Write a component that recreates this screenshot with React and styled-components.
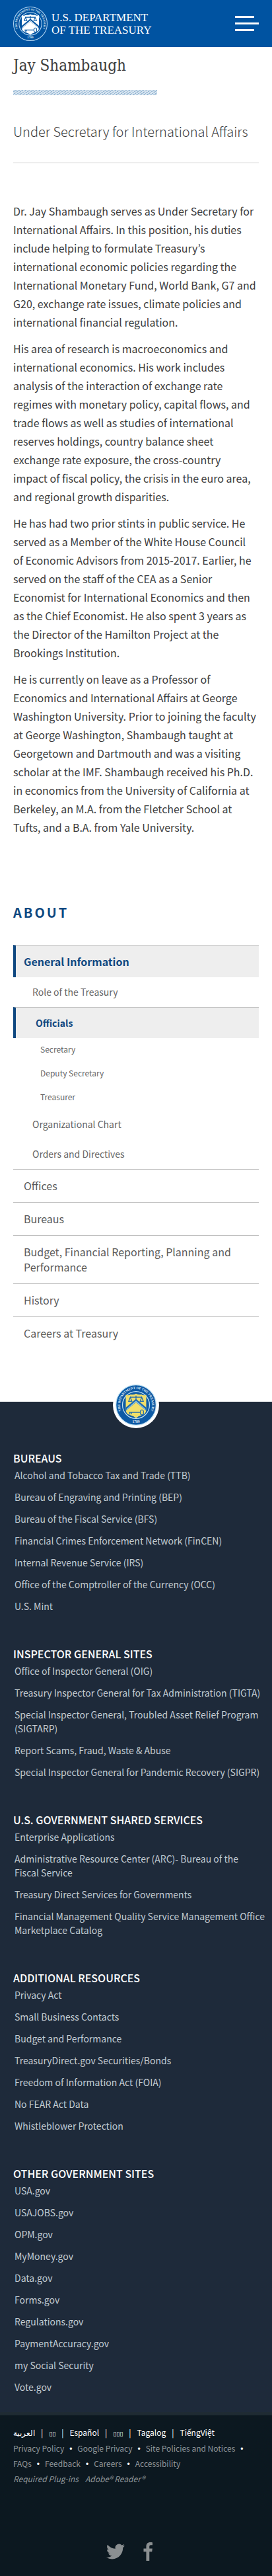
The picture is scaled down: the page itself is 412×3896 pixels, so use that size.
import React from "react";
import styled, { createGlobalStyle } from "styled-components";

const sans = `"Noto Sans CJK KR", "Noto Sans", sans-serif`;
const serif = `"DejaVu Serif Condensed", "Liberation Serif", serif`;

const GlobalStyle = createGlobalStyle`
  *, *::before, *::after { box-sizing: border-box; }
  body { margin: 0; background: #fff; color: #3d3d3d; font-family: ${sans}; font-size: 16px; }
  a { color: inherit; text-decoration: none; }
  ul { list-style: none; margin: 0; padding: 0; }
`;

const TopBar = styled.header`
  display: flex;
  align-items: center;
  justify-content: space-between;
  height: 71px;
  padding: 0 20px;
  background: #0053a1;
`;
const Brand = styled.a`
  display: flex;
  align-items: center;
  gap: 6px;
  color: #fff;
`;
const BrandName = styled.span`
  font-family: "Liberation Serif", serif;
  font-size: 17px;
  line-height: 19px;
`;
const MenuButton = styled.button`
  display: flex;
  flex-direction: column;
  gap: 7px;
  width: 36px;
  padding: 0;
  border: 0;
  background: none;
  cursor: pointer;
`;
const MenuLine = styled.span`
  width: ${(p) => (p.$long ? 36 : 29)}px;
  height: 3px;
  background: #fff;
`;

const Main = styled.main`
  padding: 0 20px;
`;
const Title = styled.h1`
  margin: 0;
  padding: 12px 0 21px;
  font-family: ${serif};
  font-weight: 400;
  font-size: 24px;
  line-height: 32px;
`;
const Hatch = styled.div`
  width: 218px;
  max-width: 100%;
  height: 8px;
  background: repeating-linear-gradient(145deg, #d8e5f0 0 2px, #94b6d3 2px 3px);
`;
const Subtitle = styled.h2`
  margin: 0;
  padding: 39px 0 30px;
  border-bottom: 2px solid #eee;
  font-weight: 300;
  font-size: 20px;
  line-height: 32px;
`;
const Bio = styled.div`
  padding: 58px 2px 0 0;
`;
const Paragraph = styled.p`
  margin: 0 0 12px;
  line-height: 28px;
`;

const SideNav = styled.nav`
  padding: 87px 0 79px;
`;
const NavTitle = styled.h2`
  margin: 0 0 33px;
  color: #0f4880;
  font-size: 20px;
  line-height: 32px;
  letter-spacing: 3px;
`;
const NavRow = styled.a`
  display: block;
  padding: 13px 16px;
  border-top: 1px solid #bfbfbf;
  color: #5b5b5b;
  font-size: 16px;
  line-height: 23px;
`;
const ActiveRow = styled(NavRow)`
  padding: ${(p) => (p.$nested ? "11px 16px 11px 30px" : "12px 12px")};
  border-left: 4px solid #0f4880;
  background: #eee;
  color: #0f4880;
  font-size: ${(p) => (p.$nested ? 14 : 16)}px;
  font-weight: 700;
  line-height: 24px;
`;
const ChildRow = styled.a`
  display: block;
  padding: ${(p) => (p.$deep ? "5px 41px 7px" : "10px 29px 11px")};
  color: #666;
  font-size: ${(p) => (p.$deep ? 12 : 14)}px;
  line-height: 24px;
`;

const Footer = styled.footer`
  background: #1e2a3a;
`;
const SealRow = styled.div`
  display: flex;
  justify-content: center;
  height: 69px;
`;
const SealDisc = styled.div`
  display: grid;
  place-items: center;
  width: 70px;
  height: 70px;
  margin-top: -30px;
  border-radius: 50%;
  background: #fff;
`;
const FooterGroups = styled.div`
  padding: 0 10px 27px 20px;
`;
const FooterGroup = styled.section`
  padding: 4px 0 45px;
  &:last-child { padding-bottom: 0; }
`;
const GroupTitle = styled.h3`
  margin: 0 0 4px;
  color: #fff;
  font-size: 16px;
  font-weight: 500;
  line-height: 24px;
`;
const LinkList = styled.ul`
  display: flex;
  flex-direction: column;
  gap: 12px;
  padding-left: 2px;
  color: #c3ccd3;
  font-size: 14px;
  line-height: 21px;
`;

const Legal = styled.div`
  padding: 15px 20px 25px;
  border-top: 5px solid #1f2b33;
  background: #0c1820;
  color: #8e9599;
  font-size: 12px;
  line-height: 22px;
`;
const Languages = styled.div`
  display: flex;
  color: #fff;
`;
const Language = styled.a`
  & + &::before { content: "|"; margin: 0 9px; }
`;
const Boxed = styled.span`
  font-family: "DejaVu Sans", sans-serif;
  font-size: 9px;
`;
const Policies = styled.ul`
  display: flex;
  flex-wrap: wrap;
`;
const Policy = styled.li`
  &:not(:last-child)::after {
    content: "•";
    margin: 0 8px;
    color: #fff;
    font-family: "Liberation Sans", sans-serif;
  }
`;
const Plugins = styled.p`
  display: flex;
  gap: 10px;
  margin: 0;
  font-style: italic;
`;
const Social = styled.div`
  display: flex;
  justify-content: center;
  gap: 20px;
  padding: 83px 14px 0 0;
  color: #8b8f91;
`;
const SocialLink = styled.a`
  display: grid;
  place-items: center;
  width: 28px;
  height: 32px;
`;

function Seal({ size, mono, id }) {
  const ring = mono ? "#0053a1" : "#0d5aa5";
  const line = mono ? "#b5d8f3" : "#bfe0f2";
  const shield = mono ? "#fff" : "#f1df6a";
  const ink = mono ? "#0053a1" : "#1c69b0";
  return (
    <svg width={size} height={size} viewBox="0 0 100 100" role="img" aria-label="Treasury seal">
      <circle cx="50" cy="50" r="49" fill={ring} stroke={line} strokeWidth="2" />
      <circle cx="50" cy="50" r="33" fill="none" stroke={line} strokeWidth="2" />
      <path id={id} d="M22 77 A39 39 0 1 1 78 77" fill="none" />
      <text fill="#e6f3fb" fontFamily="Liberation Serif, serif" fontWeight="700" fontSize="8">
        <textPath href={`#${id}`} startOffset="50%" textAnchor="middle">THE DEPARTMENT OF THE TREASURY</textPath>
      </text>
      <text x="50" y="93" fill="#e6f3fb" fontFamily="Liberation Serif, serif" fontWeight="700" fontSize="9" textAnchor="middle">1789</text>
      <path d="M25 25 Q31 28 37 24 Q44 26 50 22 Q56 26 63 24 Q69 28 75 25 L75 62 Q75 72 63 75 Q55 77 50 82 Q45 77 37 75 Q25 72 25 62 Z" fill={shield} />
      <path d="M25 64 L50 43 L75 64 L75 56 L50 35 L25 56 Z" fill={ink} />
      <path d="M27 61 L50 41 L73 61" fill="none" stroke={mono ? "#fff" : "#8ec9e6"} strokeWidth="2" />
      <path d="M36 31 H64 M50 27 V38 M36 31 L32 41 H40 Z M64 31 L60 41 H68 Z" fill="none" stroke={ink} strokeWidth="2" />
      <path d="M33 68 H61 M61 68 a4 4 0 1 0 7 0 a4 4 0 1 0 -7 0 M35 68 V73 M39 68 V72" fill="none" stroke={ink} strokeWidth="2" />
    </svg>
  );
}

const bio = [
  "Dr. Jay Shambaugh serves as Under Secretary for International Affairs. In this position, his duties include helping to formulate Treasury’s international economic policies regarding the International Monetary Fund, World Bank, G7 and G20, exchange rate issues, climate policies and international financial regulation.",
  "His area of research is macroeconomics and international economics. His work includes analysis of the interaction of exchange rate regimes with monetary policy, capital flows, and trade flows as well as studies of international reserves holdings, country balance sheet exchange rate exposure, the cross-country impact\u00a0of fiscal policy, the crisis in the euro area, and regional growth disparities.",
  "He has had two prior stints in public service. He served as a Member of the White House Council of Economic Advisors from 2015-2017. Earlier, he served on the staff of the CEA as a Senior Economist for International Economics and then as the Chief Economist. He also spent 3 years as the Director of the Hamilton Project at the Brookings Institution.",
  "He is currently on leave as a Professor of Economics and International Affairs at George Washington University. Prior to joining the faculty at George Washington, Shambaugh taught at Georgetown and Dartmouth and was a visiting scholar at the IMF. Shambaugh received his Ph.D. in economics from the University of California at Berkeley, an M.A. from the Fletcher School at Tufts, and a B.A. from Yale University.",
];

const groups = [
  ["BUREAUS", ["Alcohol and Tobacco Tax and Trade (TTB)", "Bureau of Engraving and Printing (BEP)", "Bureau of the Fiscal Service (BFS)", "Financial Crimes Enforcement Network (FinCEN)", "Internal Revenue Service (IRS)", "Office of the Comptroller of the Currency (OCC)", "U.S. Mint"]],
  ["INSPECTOR GENERAL SITES", ["Office of Inspector General (OIG)", "Treasury Inspector General for Tax Administration (TIGTA)", "Special Inspector General, Troubled Asset Relief Program (SIGTARP)", "Report Scams, Fraud, Waste & Abuse", "Special Inspector General for Pandemic Recovery (SIGPR)"]],
  ["U.S. GOVERNMENT SHARED SERVICES", ["Enterprise Applications", "Administrative Resource Center (ARC)- Bureau of the Fiscal\u00a0Service", "Treasury Direct Services for Governments", "Financial Management Quality Service Management Office Marketplace Catalog"]],
  ["ADDITIONAL RESOURCES", ["Privacy Act", "Small Business Contacts", "Budget and Performance", "TreasuryDirect.gov Securities/Bonds", "Freedom of Information Act (FOIA)", "No FEAR Act Data", "Whistleblower Protection"]],
  ["OTHER GOVERNMENT SITES", ["USA.gov", "USAJOBS.gov", "OPM.gov", "MyMoney.gov", "Data.gov", "Forms.gov", "Regulations.gov", "PaymentAccuracy.gov", "my Social Security", "Vote.gov"]],
];

const languages = ["العربية", <Boxed>▯▯</Boxed>, "Español", <Boxed>▯▯▯</Boxed>, "Tagalog", "TiếngViệt"];
const policies = ["Privacy Policy", "Google Privacy", "Site Policies and Notices", "FAQs", "Feedback", "Careers", "Accessibility"];

export default function App() {
  return (
    <>
      <GlobalStyle />
      <TopBar>
        <Brand href="#home">
          <Seal size={52} mono id="ring-top" />
          <BrandName>U.S. DEPARTMENT<br />OF THE TREASURY</BrandName>
        </Brand>
        <MenuButton aria-label="Menu">
          <MenuLine />
          <MenuLine $long />
          <MenuLine />
        </MenuButton>
      </TopBar>
      <Main>
        <Title>Jay Shambaugh</Title>
        <Hatch />
        <Subtitle>Under Secretary for International Affairs</Subtitle>
        <Bio>
          {bio.map((text) => <Paragraph key={text}>{text}</Paragraph>)}
        </Bio>
        <SideNav aria-label="About">
          <NavTitle>ABOUT</NavTitle>
          <ActiveRow href="#general">General Information</ActiveRow>
          <ChildRow href="#role">Role of the Treasury</ChildRow>
          <ActiveRow $nested href="#officials">Officials</ActiveRow>
          <ChildRow $deep href="#secretary">Secretary</ChildRow>
          <ChildRow $deep href="#deputy">Deputy Secretary</ChildRow>
          <ChildRow $deep href="#treasurer">Treasurer</ChildRow>
          <ChildRow href="#chart">Organizational Chart</ChildRow>
          <ChildRow href="#orders">Orders and Directives</ChildRow>
          <NavRow href="#offices">Offices</NavRow>
          <NavRow href="#bureaus">Bureaus</NavRow>
          <NavRow href="#budget">Budget, Financial Reporting, Planning and Performance</NavRow>
          <NavRow href="#history">History</NavRow>
          <NavRow href="#careers">Careers at Treasury</NavRow>
        </SideNav>
      </Main>
      <Footer>
        <SealRow>
          <SealDisc><Seal size={62} id="ring-foot" /></SealDisc>
        </SealRow>
        <FooterGroups>
          {groups.map(([title, links]) => (
            <FooterGroup key={title}>
              <GroupTitle>{title}</GroupTitle>
              <LinkList>
                {links.map((l) => <li key={l}><a href="#link">{l}</a></li>)}
              </LinkList>
            </FooterGroup>
          ))}
        </FooterGroups>
        <Legal>
          <Languages>
            {languages.map((l, i) => <Language key={i} href="#lang">{l}</Language>)}
          </Languages>
          <Policies>
            {policies.map((p) => <Policy key={p}><a href="#policy">{p}</a></Policy>)}
          </Policies>
          <Plugins><span>Required Plug-ins</span><a href="#reader">Adobe® Reader®</a></Plugins>
          <Social>
            <SocialLink href="#twitter" aria-label="Twitter">
              <svg width="28" height="28" viewBox="0 0 24 24" fill="currentColor"><path d="M23.954 4.569a10 10 0 0 1-2.825.775 4.958 4.958 0 0 0 2.163-2.723 9.99 9.99 0 0 1-3.127 1.184 4.92 4.92 0 0 0-8.384 4.482C7.691 8.094 4.066 6.13 1.64 3.161a4.822 4.822 0 0 0-.666 2.475c0 1.71.87 3.213 2.188 4.096a4.904 4.904 0 0 1-2.228-.616v.061a4.923 4.923 0 0 0 3.946 4.827 4.996 4.996 0 0 1-2.212.085 4.937 4.937 0 0 0 4.604 3.417 9.868 9.868 0 0 1-6.102 2.105c-.39 0-.779-.023-1.17-.067a13.995 13.995 0 0 0 7.557 2.209c9.054 0 13.999-7.496 13.999-13.986 0-.209 0-.42-.015-.63a9.936 9.936 0 0 0 2.46-2.548z" /></svg>
            </SocialLink>
            <SocialLink href="#facebook" aria-label="Facebook">
              <svg width="15" height="28" viewBox="0 0 15 28" fill="currentColor"><path d="M14.984.187v4.125h-2.453c-1.922 0-2.281.922-2.281 2.25v2.953h4.578l-.609 4.625H10.25V28H5.469V14.14H1.484V9.515h3.985V6.109C5.469 2.156 7.891 0 11.422 0c1.687 0 3.141.125 3.562.187z" /></svg>
            </SocialLink>
          </Social>
        </Legal>
      </Footer>
    </>
  );
}
